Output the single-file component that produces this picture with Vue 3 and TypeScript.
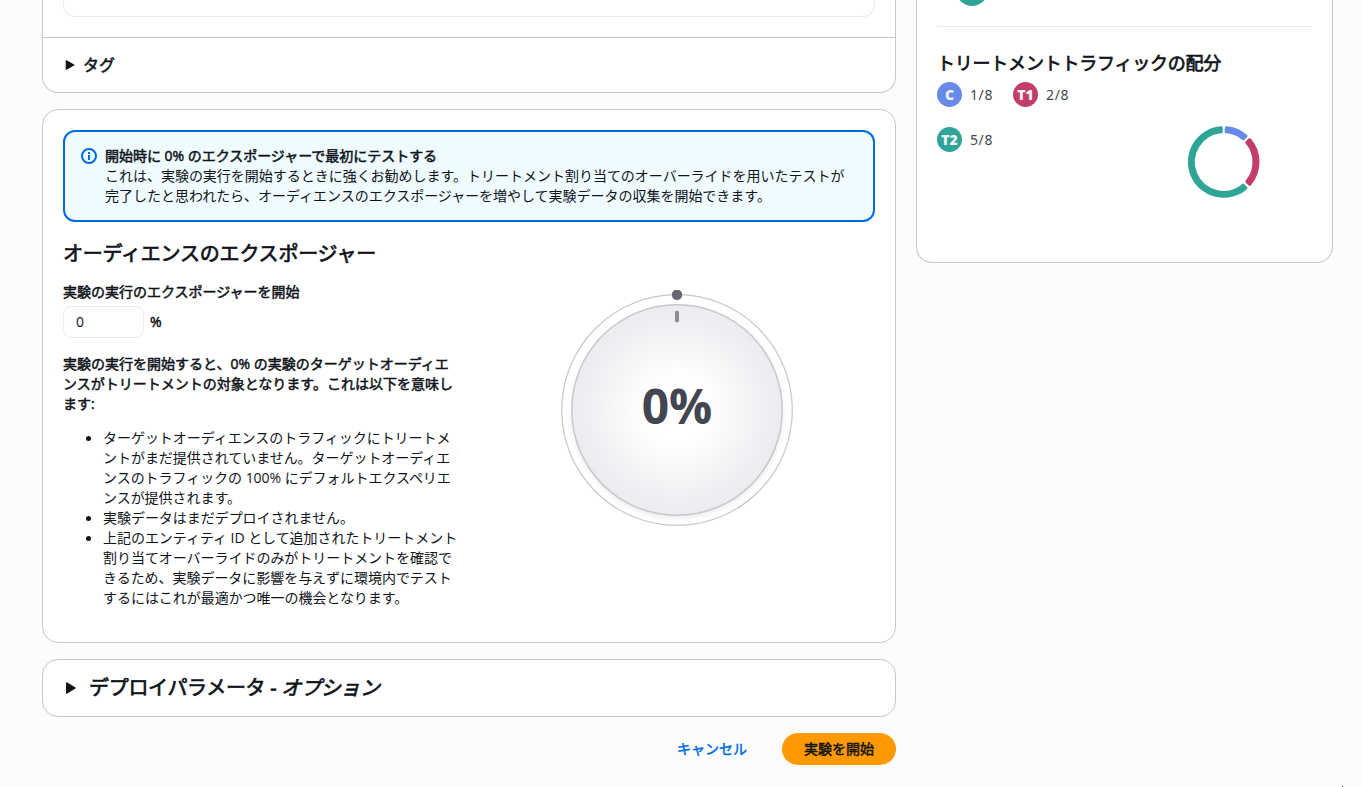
<script setup lang="ts">
interface Segment {
  label: string
  share: number
  color: string
}

const segments: Segment[] = [
  { label: 'C', share: 1, color: '#688ae8' },
  { label: 'T1', share: 2, color: '#c33d69' },
  { label: 'T2', share: 5, color: '#2ea597' },
]
const total = 8

const point = (r: number, deg: number): string => {
  const a = ((deg - 90) * Math.PI) / 180
  return `${(39.7 + r * Math.cos(a)).toFixed(2)} ${(40 + r * Math.sin(a)).toFixed(2)}`
}

// Annular sector; a rounded stroke of the same colour softens the corners.
const sector = (from: number, to: number): string => {
  const outer = 34.2
  const inner = 30.4
  const large = to - from > 180 ? 1 : 0
  return `M${point(outer, from + 4.5)} A${outer} ${outer} 0 ${large} 1 ${point(outer, to - 4.5)} L${point(inner, to - 4.8)} A${inner} ${inner} 0 ${large} 0 ${point(inner, from + 4.8)} Z`
}

let cursor = 0
const arcs = segments.map((s) => {
  const from = cursor
  cursor += (s.share / total) * 360
  return { color: s.color, d: sector(from, cursor) }
})

const alertLines: string[] = [
  'これは、実験の実行を開始するときに強くお勧めします。トリートメント割り当てのオーバーライドを用いたテストが',
  '完了したと思われたら、オーディエンスのエクスポージャーを増やして実験データの収集を開始できます。',
]
const summaryLines: string[] = [
  '実験の実行を開始すると、0% の実験のターゲットオーディエ',
  'ンスがトリートメントの対象となります。これは以下を意味し',
  'ます:',
]
const bullets: string[][] = [
  [
    'ターゲットオーディエンスのトラフィックにトリートメ',
    'ントがまだ提供されていません。ターゲットオーディエ',
    'ンスのトラフィックの 100% にデフォルトエクスペリエ',
    'ンスが提供されます。',
  ],
  ['実験データはまだデプロイされません。'],
  [
    '上記のエンティティ ID として追加されたトリートメント',
    '割り当てオーバーライドのみがトリートメントを確認で',
    'きるため、実験データに影響を与えずに環境内でテスト',
    'するにはこれが最適かつ唯一の機会となります。',
  ],
]
</script>

<template>
  <div class="page">
    <main class="main">
      <section class="card card-top">
        <div class="top-body"><div class="top-box"></div></div>
        <div class="tags">
          <svg class="caret-s" viewBox="0 0 10 12"><path d="M1.3 1.8 8.8 6 1.3 10.2Z" /></svg>
          <span class="semi">タグ</span>
        </div>
      </section>

      <section class="card card-exposure">
        <div class="alert">
          <svg class="info" viewBox="0 0 16 16">
            <circle cx="8" cy="8" r="7" />
            <path d="M8 7v5M8 4v2" />
          </svg>
          <div class="alert-text">
            <span class="line semi">開始時に 0% のエクスポージャーで最初にテストする</span>
            <span v-for="l in alertLines" :key="l" class="line">{{ l }}</span>
          </div>
        </div>
        <h2>オーディエンスのエクスポージャー</h2>
        <div class="columns">
          <div class="form">
            <label class="semi">実験の実行のエクスポージャーを開始</label>
            <div class="field"><div class="input">0</div><span class="semi">%</span></div>
            <p class="semi"><span v-for="l in summaryLines" :key="l" class="line">{{ l }}</span></p>
            <ul>
              <li v-for="(b, i) in bullets" :key="i">
                <span v-for="l in b" :key="l" class="line">{{ l }}</span>
              </li>
            </ul>
          </div>
          <div class="dial">
            <svg viewBox="0 0 240 240">
              <defs>
                <radialGradient id="knob">
                  <stop offset="0.3" stop-color="#fff" />
                  <stop offset="1" stop-color="#ebebf0" />
                </radialGradient>
                <filter id="soft" x="-10%" y="-10%" width="120%" height="120%">
                  <feGaussianBlur stdDeviation="3" />
                </filter>
              </defs>
              <circle cx="120" cy="120" r="115.3" fill="#fff" stroke="#c6c6cd" stroke-width="1.2" />
              <circle cx="120" cy="122.5" r="105" fill="#000" opacity="0.1" filter="url(#soft)" />
              <circle cx="120" cy="120" r="105.2" fill="url(#knob)" stroke="#c6c6cd" stroke-width="1.4" />
              <circle cx="120" cy="4.8" r="5.2" fill="#656871" />
              <rect x="118" y="20.7" width="4" height="11.6" rx="1.6" fill="#8c8c94" />
            </svg>
            <span class="value">0%</span>
          </div>
        </div>
      </section>

      <section class="card card-deploy">
        <svg class="caret-l" viewBox="0 0 12 14"><path d="M1.6 1.8 10.2 7 1.6 12.2Z" /></svg>
        <span class="deploy-title">デプロイパラメータ - <em>オプション</em></span>
      </section>

      <footer class="actions">
        <a class="semi">キャンセル</a>
        <button type="button" class="semi">実験を開始</button>
      </footer>
    </main>

    <aside class="card side">
      <div class="dot"></div>
      <hr />
      <h3>トリートメントトラフィックの配分</h3>
      <div class="split">
        <div class="legend">
          <div v-for="s in segments" :key="s.label" class="item">
            <span class="badge" :style="{ background: s.color }">{{ s.label }}</span>
            <span class="ratio">{{ s.share }}/{{ total }}</span>
          </div>
        </div>
        <svg class="donut" viewBox="0 0 80 80">
          <path v-for="a in arcs" :key="a.color" :d="a.d" :fill="a.color" :stroke="a.color" stroke-width="3.2" stroke-linejoin="round" />
        </svg>
      </div>
    </aside>
    <div class="speck"></div>
  </div>
</template>

<style>
body {
  background: #fcfcfd;
  overflow: hidden;
}
</style>

<style scoped>
* {
  box-sizing: border-box;
}
.page {
  position: relative;
  display: flex;
  align-items: flex-start;
  gap: 20px;
  height: 787px;
  padding: 0 29px 0 42px;
  overflow: hidden;
  background: #fcfcfd;
  color: #0f141a;
  font: 14px/20px 'Open Sans', 'Noto Sans CJK JP', sans-serif;
  white-space: nowrap;
}
.main {
  width: 854px;
}
.semi {
  font-weight: 400;
  -webkit-text-stroke: 0.5px currentColor;
}
h2,
h3,
.deploy-title {
  font-weight: 400;
  -webkit-text-stroke: 0.7px currentColor;
}
.card {
  background: #fff;
  border: 1px solid #c6c6cd;
  border-radius: 16px;
}
.card-top {
  height: 93px;
  border-top: 0;
  border-radius: 0 0 16px 16px;
}
.top-body {
  height: 38px;
  padding: 0 20px;
  border-bottom: 1px solid #c6c6cd;
}
.top-box {
  height: 17px;
  border: 1px solid #ebebf0;
  border-top: 0;
  border-radius: 0 0 12px 12px;
}
.tags {
  display: flex;
  align-items: center;
  gap: 8px;
  height: 54px;
  padding-left: 22px;
  font-size: 16px;
}
.caret-s {
  width: 10px;
  height: 12px;
}
.caret-s path,
.caret-l path {
  fill: #0f141a;
  stroke: #0f141a;
  stroke-width: 1.2;
  stroke-linejoin: round;
}
.card-exposure {
  height: 534px;
  margin-top: 16px;
  padding: 20px;
}
.alert {
  display: flex;
  gap: 8px;
  height: 92px;
  padding: 14px 16px;
  border: 2px solid #006ce0;
  border-radius: 12px;
  background: #f0fbff;
}
.info {
  flex: none;
  width: 16px;
  height: 16px;
  margin-top: 2px;
}
.info circle,
.info path {
  fill: none;
  stroke: #006ce0;
  stroke-width: 2;
}
.alert-text {
  letter-spacing: -0.02px;
}
.line {
  display: block;
  height: 20px;
}
h2 {
  height: 24px;
  margin: 20px 0 0;
  font-size: 20px;
  line-height: 24px;
  letter-spacing: -0.2px;
}
.columns {
  display: flex;
  justify-content: space-between;
}
.form {
  padding-top: 16px;
}
label {
  display: block;
}
.field {
  display: flex;
  align-items: center;
  gap: 6px;
  margin-top: 4px;
}
.input {
  width: 81px;
  height: 32px;
  padding: 5px 12px;
  border: 1px solid #ebebf0;
  border-radius: 8px;
}
p {
  margin: 16px 0 0;
}
ul {
  margin: 14px 0 0;
  padding-left: 40px;
  list-style: none;
  letter-spacing: -0.04px;
}
li {
  position: relative;
}
li::before {
  content: '';
  position: absolute;
  left: -17px;
  top: 8px;
  width: 5px;
  height: 5px;
  border-radius: 50%;
  background: #0f141a;
}
.dial {
  position: relative;
  width: 240px;
  height: 240px;
  margin: 24px 78px 0 0;
}
.dial svg {
  display: block;
  width: 240px;
  height: 240px;
}
.value {
  position: absolute;
  inset: 0;
  color: #424650;
  font-size: 48px;
  font-weight: 700;
  line-height: 232px;
  text-align: center;
}
.card-deploy {
  display: flex;
  align-items: center;
  gap: 12px;
  height: 58px;
  margin-top: 16px;
  padding-left: 22px;
}
.caret-l {
  width: 12px;
  height: 14px;
}
.deploy-title {
  font-size: 20px;
  line-height: 24px;
  letter-spacing: -0.3px;
}
.actions {
  display: flex;
  align-items: center;
  justify-content: flex-end;
  gap: 35px;
  margin-top: 16px;
}
.actions a {
  color: #006ce0;
}
button {
  width: 114px;
  height: 32px;
  padding: 0;
  border: 0;
  border-radius: 16px;
  background: #ff9900;
  color: #0f141a;
  font: inherit;
}
.side {
  width: 417px;
  height: 263px;
  padding: 0 20px;
  border-top: 0;
  border-radius: 0 0 16px 16px;
}
.dot {
  width: 32px;
  height: 32px;
  margin: -26px 0 0 19px;
  border-radius: 50%;
  background: #2ea597;
}
hr {
  height: 1px;
  margin: 20px 0 0;
  border: 0;
  background: #ebebf0;
}
h3 {
  margin: 25px 0 0;
  font-size: 18px;
  line-height: 22px;
  letter-spacing: -0.22px;
}
.split {
  display: flex;
  justify-content: space-between;
}
.legend {
  display: grid;
  grid-template-columns: auto auto;
  gap: 20px;
  padding-top: 8px;
  align-content: start;
}
.item {
  display: flex;
  align-items: center;
  gap: 8px;
  color: #424650;
}
.ratio {
  font-family: 'Noto Sans', sans-serif;
  letter-spacing: 0.6px;
}
.badge {
  width: 25px;
  height: 25px;
  border-radius: 50%;
  color: #f3f3f7;
  font-family: 'Noto Sans', sans-serif;
  font-weight: 900;
  line-height: 25px;
  text-align: center;
}
.donut {
  width: 80px;
  height: 80px;
  margin: 48px 48px 0 0;
}
.speck {
  position: absolute;
  right: 19px;
  bottom: 0;
  width: 1px;
  height: 1px;
  background: #222;
}
</style>
